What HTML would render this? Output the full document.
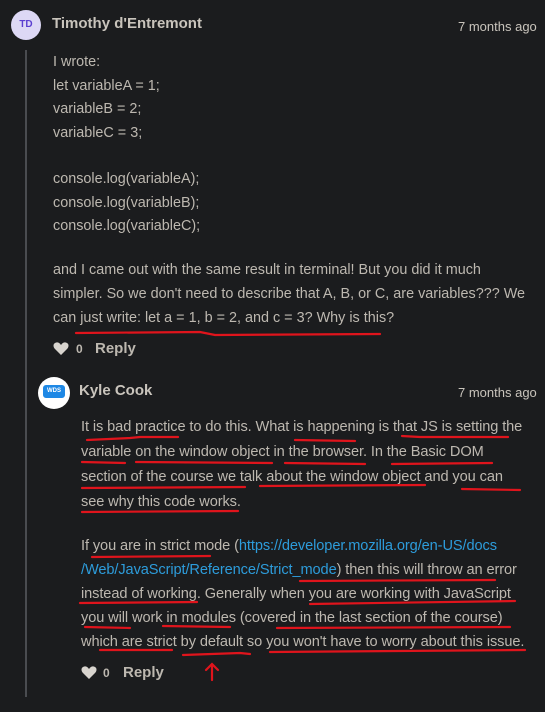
<!DOCTYPE html>
<html><head><meta charset="utf-8"><style>
body{margin:0;width:545px;height:712px;background:#1b1c1e;position:relative;overflow:hidden;font-family:"Liberation Sans",sans-serif;color:#bdb8b0}
.a{position:absolute;white-space:nowrap}
.t1{font-size:14.4px}
.t2{font-size:14.6px;letter-spacing:-0.1px}
.name{font-weight:bold;font-size:15px;color:#c9c4bc}
.time{font-size:13px;color:#c9c4bc}
.bold{font-weight:bold;color:#bdb8b0}
a{color:#2d9cdb;text-decoration:none}
</style></head><body>
<div class="a" style="left:25px;top:50px;width:2px;height:647px;background:#4a4c50"></div>
<div class="a" style="left:11px;top:10px;width:30px;height:30px;border-radius:50%;background:#ddd8f5;color:#5b3fd0;font-size:10px;font-weight:bold;text-align:center;line-height:30px">TD</div>
<div class="a name" style="left:52px;top:15px">Timothy d'Entremont</div>
<div class="a time" style="left:458px;top:19px">7 months ago</div>
<div class="a t1" style="left:53px;top:54px">I wrote:</div>
<div class="a t1" style="left:53px;top:78px">let variableA = 1;</div>
<div class="a t1" style="left:53px;top:101px">variableB = 2;</div>
<div class="a t1" style="left:53px;top:125px">variableC = 3;</div>
<div class="a t1" style="left:53px;top:171px">console.log(variableA);</div>
<div class="a t1" style="left:53px;top:195px">console.log(variableB);</div>
<div class="a t1" style="left:53px;top:218px">console.log(variableC);</div>
<div class="a t1" style="left:53px;top:262px">and I came out with the same result in terminal! But you did it much</div>
<div class="a t1" style="left:53px;top:286px">simpler. So we don't need to describe that A, B, or C, are variables??? We</div>
<div class="a t1" style="left:53px;top:310px">can just write: let a = 1, b = 2, and c = 3? Why is this?</div>
<svg class="a" style="left:53px;top:341px" width="16" height="15" viewBox="0 0 16 15"><path d="M8 14L2 8C0 6 0 3 2 2S6 1 8 4C10 1 12 1 14 2S16 6 14 8Z" fill="#d8d4ce"/></svg>
<div class="a bold" style="left:76px;top:342px;font-size:12px">0</div>
<div class="a bold" style="left:95px;top:340px;font-size:15px">Reply</div>
<div class="a" style="left:38px;top:377px;width:32px;height:32px;border-radius:50%;background:#fff"></div>
<div class="a" style="left:43px;top:385px;width:20px;height:11px;border:1.5px solid #1e88e5;border-radius:3px;background:#1e88e5;color:#fff;font-size:6px;font-weight:bold;text-align:center;line-height:11px">WDS</div>
<div class="a name" style="left:79px;top:382px">Kyle Cook</div>
<div class="a time" style="left:458px;top:385px">7 months ago</div>
<div class="a t2" style="left:81px;top:419px">It is bad practice to do this. What is happening is that JS is setting the</div>
<div class="a t2" style="left:81px;top:444px">variable on the window object in the browser. In the Basic DOM</div>
<div class="a t2" style="left:81px;top:469px">section of the course we talk about the window object and you can</div>
<div class="a t2" style="left:81px;top:494px">see why this code works.</div>
<div class="a t2" style="left:81px;top:538px">If you are in strict mode (<a>https://developer.mozilla.org/en-US/docs</a></div>
<div class="a t2" style="left:81px;top:562px"><a>/Web/JavaScript/Reference/Strict_mode</a>) then this will throw an error</div>
<div class="a t2" style="left:81px;top:586px">instead of working. Generally when you are working with JavaScript</div>
<div class="a t2" style="left:81px;top:610px">you will work in modules (covered in the last section of the course)</div>
<div class="a t2" style="left:81px;top:634px">which are strict by default so you won't have to worry about this issue.</div>
<svg class="a" style="left:81px;top:665px" width="16" height="15" viewBox="0 0 16 15"><path d="M8 14L2 8C0 6 0 3 2 2S6 1 8 4C10 1 12 1 14 2S16 6 14 8Z" fill="#d8d4ce"/></svg>
<div class="a bold" style="left:103px;top:666px;font-size:12px">0</div>
<div class="a bold" style="left:123px;top:664px;font-size:15px">Reply</div>
<svg class="a" style="left:0;top:0" width="545" height="712" fill="none" stroke="#e0141c" stroke-width="2.2" stroke-linecap="round">
<path d="M76 333L200 332L215 335L380 334"/>
<path d="M87 440L130 438L140 437L178 437"/><path d="M295 440L355 441"/><path d="M402 436L420 437L508 437"/>
<path d="M82 462L125 463"/><path d="M136 462L272 463"/><path d="M285 463L365 464"/><path d="M392 464L492 463"/>
<path d="M82 488L245 487"/><path d="M260 486L425 485"/><path d="M462 489L520 490"/>
<path d="M82 512L238 511"/>
<path d="M92 557L210 556"/>
<path d="M300 581L495 580"/>
<path d="M80 603L197 602"/><path d="M310 604L515 601"/>
<path d="M85 627L130 628"/><path d="M163 626L230 627"/><path d="M277 628L510 627"/>
<path d="M100 650L172 650"/><path d="M183 655L240 653L250 654"/><path d="M270 652L525 650"/>
<path d="M212 680L212 664M206 670L212 664L218 670"/>
</svg>
</body></html>
